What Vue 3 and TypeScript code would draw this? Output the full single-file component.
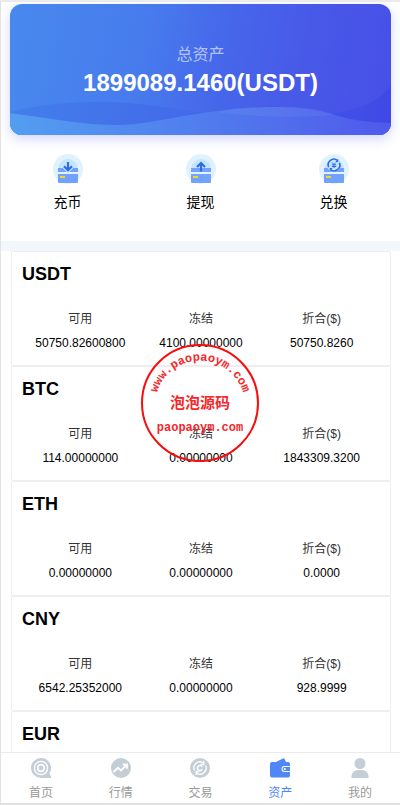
<script setup lang="ts">
interface Action {
  key: 'deposit' | 'withdraw' | 'swap'
  label: string
}
interface Coin {
  name: string
  available: string
  frozen: string
  value: string
}
interface Tab {
  key: 'home' | 'market' | 'trade' | 'assets' | 'mine'
  label: string
}

const total = '1899089.1460(USDT)'

const actions: Action[] = [
  { key: 'deposit', label: '充币' },
  { key: 'withdraw', label: '提现' },
  { key: 'swap', label: '兑换' },
]

const coins: Coin[] = [
  { name: 'USDT', available: '50750.82600800', frozen: '4100.00000000', value: '50750.8260' },
  { name: 'BTC', available: '114.00000000', frozen: '0.00000000', value: '1843309.3200' },
  { name: 'ETH', available: '0.00000000', frozen: '0.00000000', value: '0.0000' },
  { name: 'CNY', available: '6542.25352000', frozen: '0.00000000', value: '928.9999' },
  { name: 'EUR', available: '', frozen: '', value: '' },
]

const tabs: Tab[] = [
  { key: 'home', label: '首页' },
  { key: 'market', label: '行情' },
  { key: 'trade', label: '交易' },
  { key: 'assets', label: '资产' },
  { key: 'mine', label: '我的' },
]
const activeTab: Tab['key'] = 'assets'
</script>

<template>
  <div class="app">
    <main class="content">
      <section class="balance">
        <svg class="waves" viewBox="0 0 381 131" preserveAspectRatio="none" aria-hidden="true">
          <defs>
            <linearGradient id="waveFront" x1="0" x2="1" y1="0" y2="0">
              <stop offset="0" stop-color="#539ef0" />
              <stop offset="0.5" stop-color="#507dee" />
              <stop offset="1" stop-color="#5059eb" />
            </linearGradient>
            <linearGradient id="waveBack" x1="0" x2="1" y1="0" y2="0">
              <stop offset="0" stop-color="#437fea" />
              <stop offset="0.5" stop-color="#4368ea" />
              <stop offset="1" stop-color="#4048e6" />
            </linearGradient>
          </defs>
          <path d="M0 108C30 100 60 98 92 98C145 98 175 110 240 112C280 113 310 112 330 108C360 103 372 93 381 81V131H0Z" fill="url(#waveBack)" />
          <path d="M0 109C45 115 80 122 112 121C150 120 190 104 265 103C330 103 315 117 381 119V131H0Z" fill="url(#waveFront)" />
          <path d="M207 108C225 104 245 103 265 103C295 103 310 106 324 111C290 114 240 113 207 108Z" fill="#fff" opacity="0.05" />
        </svg>
        <p class="balance-label">总资产</p>
        <p class="balance-total">{{ total }}</p>
      </section>

      <nav class="actions">
        <button v-for="a in actions" :key="a.key" type="button" class="action">
          <svg class="action-icon" viewBox="0 0 30 30" aria-hidden="true">
            <circle cx="15" cy="15" r="15" fill="#e0f2ff" />
            <circle cx="15" cy="15" r="10" fill="#c5e4fd" />
            <path d="M5 14H25V18H5Z" fill="#72a2ff" />
            <path d="M5 18H25V20.5H5Z" fill="#e4f1ff" />
            <path d="M5 20H25V28Q25 29 24 29H6Q5 29 5 28Z" fill="#72a2ff" />
            <path d="M7 22H12V24H7Z" fill="#f2d71e" />
            <path v-if="a.key === 'deposit'" d="M15 8V16M11 12.5L15 16.5L19 12.5" fill="none" stroke="#c5e4fd" stroke-width="4" />
            <path v-if="a.key === 'deposit'" d="M15 8V16M11 12.2L15 16.2L19 12.2" fill="none" stroke="#2e6be6" stroke-width="2.2" />
            <path v-if="a.key === 'withdraw'" d="M15 17.500V9.500M11 13L15 9L19 13" fill="none" stroke="#2e6be6" stroke-width="2.2" />
            <g v-if="a.key === 'swap'">
              <circle cx="15" cy="11" r="7" fill="#c5e4fd" />
              <path d="M9.600 13.200A5.800 5.800 0 0 1 18.500 6.400M20.400 8.800A5.800 5.800 0 0 1 11.500 15.600" fill="none" stroke="#2e6be6" stroke-width="1.600" />
              <path d="M19.300 5V8H16.300ZM10.700 17V14H13.700Z" fill="#2e6be6" />
              <path d="M13 8.500L15 10.500L17 8.500M15 10.500V14M12.800 10.800H17.200M12.800 12.500H17.200" fill="none" stroke="#2e6be6" stroke-width="1" />
            </g>
          </svg>
          <span>{{ a.label }}</span>
        </button>
      </nav>

      <div class="divider"></div>

      <section class="coins">
        <article v-for="c in coins" :key="c.name" class="coin">
          <h2 class="coin-name">{{ c.name }}</h2>
          <dl v-if="c.available" class="figures">
            <div class="figure">
              <dt>可用</dt>
              <dd>{{ c.available }}</dd>
            </div>
            <div class="figure">
              <dt>冻结</dt>
              <dd>{{ c.frozen }}</dd>
            </div>
            <div class="figure">
              <dt>折合($)</dt>
              <dd>{{ c.value }}</dd>
            </div>
          </dl>
        </article>
      </section>
    </main>

    <nav class="tabbar">
      <a v-for="t in tabs" :key="t.key" href="#" class="tab" :class="{ active: t.key === activeTab }">
        <svg class="tab-icon" viewBox="0 0 20 20" aria-hidden="true">
          <g v-if="t.key === 'home'">
            <path d="M10 0A10 10 0 1 0 10 20H20V18.500L18.500 15.300A10 10 0 0 0 10 0Z" fill="currentColor" />
            <circle cx="10" cy="10" r="6.600" fill="none" stroke="#fff" stroke-width="1.300" />
            <circle cx="10" cy="10" r="3.300" fill="none" stroke="#fff" stroke-width="1.700" />
          </g>
          <g v-if="t.key === 'market'">
            <circle cx="10" cy="10" r="10" fill="currentColor" />
            <path d="M2.500 14L7 9.800L10 12.500L15.500 7M11.800 6.500H16V10.800" fill="none" stroke="#fff" stroke-width="1.800" />
          </g>
          <g v-if="t.key === 'trade'">
            <circle cx="10" cy="10" r="10" fill="currentColor" />
            <path d="M4.500 12.500A6 6 0 0 1 13.500 5.100M15.500 7.500A6 6 0 0 1 6.500 14.900M13.800 3V6.500H10.500M6.200 17V13.500H9.500" fill="none" stroke="#fff" stroke-width="1.300" />
            <path d="M12.200 8.600A2.600 2.600 0 1 0 12.200 11.400" fill="none" stroke="#fff" stroke-width="1.500" />
          </g>
          <g v-if="t.key === 'assets'">
            <path d="M6 4L13 0.500Q14 0 14.600 1L16 4Z" fill="currentColor" />
            <path d="M2 4H18Q20 4 20 6V8H14.500Q11.500 8 11.500 11T14.500 14H20V17.500Q20 19.500 18 19.500H2Q0 19.500 0 17.500V6Q0 4 2 4Z" fill="currentColor" />
            <path d="M14.500 9H20V13H14.500Q12.500 13 12.500 11T14.500 9Z" fill="currentColor" />
            <circle cx="14.800" cy="11" r="1.100" fill="#fff" />
          </g>
          <g v-if="t.key === 'mine'">
            <circle cx="10" cy="5.500" r="5.500" fill="currentColor" />
            <path d="M1.500 20V18.500Q2 12 8 12H12Q18 12 18.500 18.500V20Z" fill="currentColor" />
          </g>
        </svg>
        <span>{{ t.label }}</span>
      </a>
    </nav>

    <svg class="stamp" viewBox="0 0 120 120" aria-hidden="true">
      <defs>
        <path id="stampArc" d="M16 72A45 45 0 1 1 104 72" />
      </defs>
      <circle cx="60" cy="60" r="58" fill="none" stroke="#f80c0c" stroke-width="2" />
      <text class="stamp-arc">
        <textPath href="#stampArc" startOffset="50%" text-anchor="middle">www.paopaoym.com</textPath>
      </text>
      <text class="stamp-name" x="60" y="65" text-anchor="middle">泡泡源码</text>
      <text class="stamp-site" x="60" y="88" text-anchor="middle">paopaoym.com</text>
    </svg>
  </div>
</template>

<style>
body {
  background: #f2f2f2;
}
</style>

<style scoped>
.app {
  position: relative;
  box-sizing: border-box;
  display: flex;
  flex-direction: column;
  height: 100vh;
  border: solid #e2e2e2;
  border-width: 2px 0 2px 1px;
  border-top-color: #ebebeb;
  background: #fff;
  color: #000;
  font-family: "Liberation Sans", "Noto Sans CJK SC", sans-serif;
}
.content {
  flex: 1;
  min-height: 0;
  overflow-y: auto;
  scrollbar-width: none;
}
.balance {
  position: relative;
  box-sizing: border-box;
  height: 131px;
  margin: 2px 9px 0;
  padding-top: 39px;
  border-radius: 12px;
  overflow: hidden;
  background: linear-gradient(100deg, #4889ed 0%, #477bed 35%, #4667ea 55%, #4859e8 75%, #474fe7 100%);
  box-shadow: 0 4px 12px rgba(80, 90, 240, 0.25);
  text-align: center;
}
.waves {
  position: absolute;
  inset: 0;
  width: 100%;
  height: 100%;
}
.balance-label,
.balance-total {
  position: relative;
  margin: 0;
}
.balance-label {
  color: rgba(255, 255, 255, 0.6);
  font-size: 16px;
  line-height: 24px;
}
.balance-total {
  color: #fff;
  font-size: 24px;
  font-weight: 700;
  line-height: 32px;
}
.actions {
  display: grid;
  grid-template-columns: repeat(3, 1fr);
  padding: 19px 0 28px;
}
.action {
  display: flex;
  flex-direction: column;
  align-items: center;
  gap: 7px;
  padding: 0;
  border: 0;
  background: none;
  color: #000;
  font: inherit;
  font-size: 14px;
  line-height: 22px;
}
.action-icon {
  width: 30px;
  height: 30px;
}
.divider {
  height: 10px;
  background: #f3f7fb;
}
.coins {
  padding: 0 9px 0 10px;
}
.coin {
  box-sizing: border-box;
  height: 115px;
  padding: 12px 8px 0 10px;
  border: 1px solid #eee;
  border-radius: 2px;
}
.coin-name {
  margin: 0;
  font-size: 18px;
  line-height: 20px;
}
.figures {
  display: grid;
  grid-template-columns: repeat(3, 1fr);
  margin: 23px 0 0 -2px;
  font-size: 12px;
  line-height: 24px;
  text-align: center;
}
.figure dt {
  color: #333;
}
.figure dd {
  margin: 0;
}
.tabbar {
  display: flex;
  box-sizing: border-box;
  height: 51px;
  border-top: 1px solid #ebebeb;
  background: #fff;
}
.tab {
  flex: 1;
  display: flex;
  flex-direction: column;
  align-items: center;
  gap: 7px;
  padding-top: 5px;
  color: #c4ced6;
  font-size: 12px;
  line-height: 16px;
  text-decoration: none;
}
.tab span {
  color: #999;
}
.tab.active,
.tab.active span {
  color: #5087f8;
}
.tab-icon {
  width: 20px;
  height: 20px;
}
.stamp {
  position: absolute;
  top: 50%;
  left: 50%;
  width: 120px;
  height: 120px;
  margin: -60px 0 0 -61px;
  pointer-events: none;
}
.stamp text {
  fill: #f5282c;
}
.stamp .stamp-arc {
  font: 700 12px "Liberation Mono", monospace;
}
.stamp .stamp-name {
  font: 700 15px "Noto Sans CJK SC", sans-serif;
}
.stamp .stamp-site {
  font: 700 12px "Liberation Mono", monospace;
}
</style>
